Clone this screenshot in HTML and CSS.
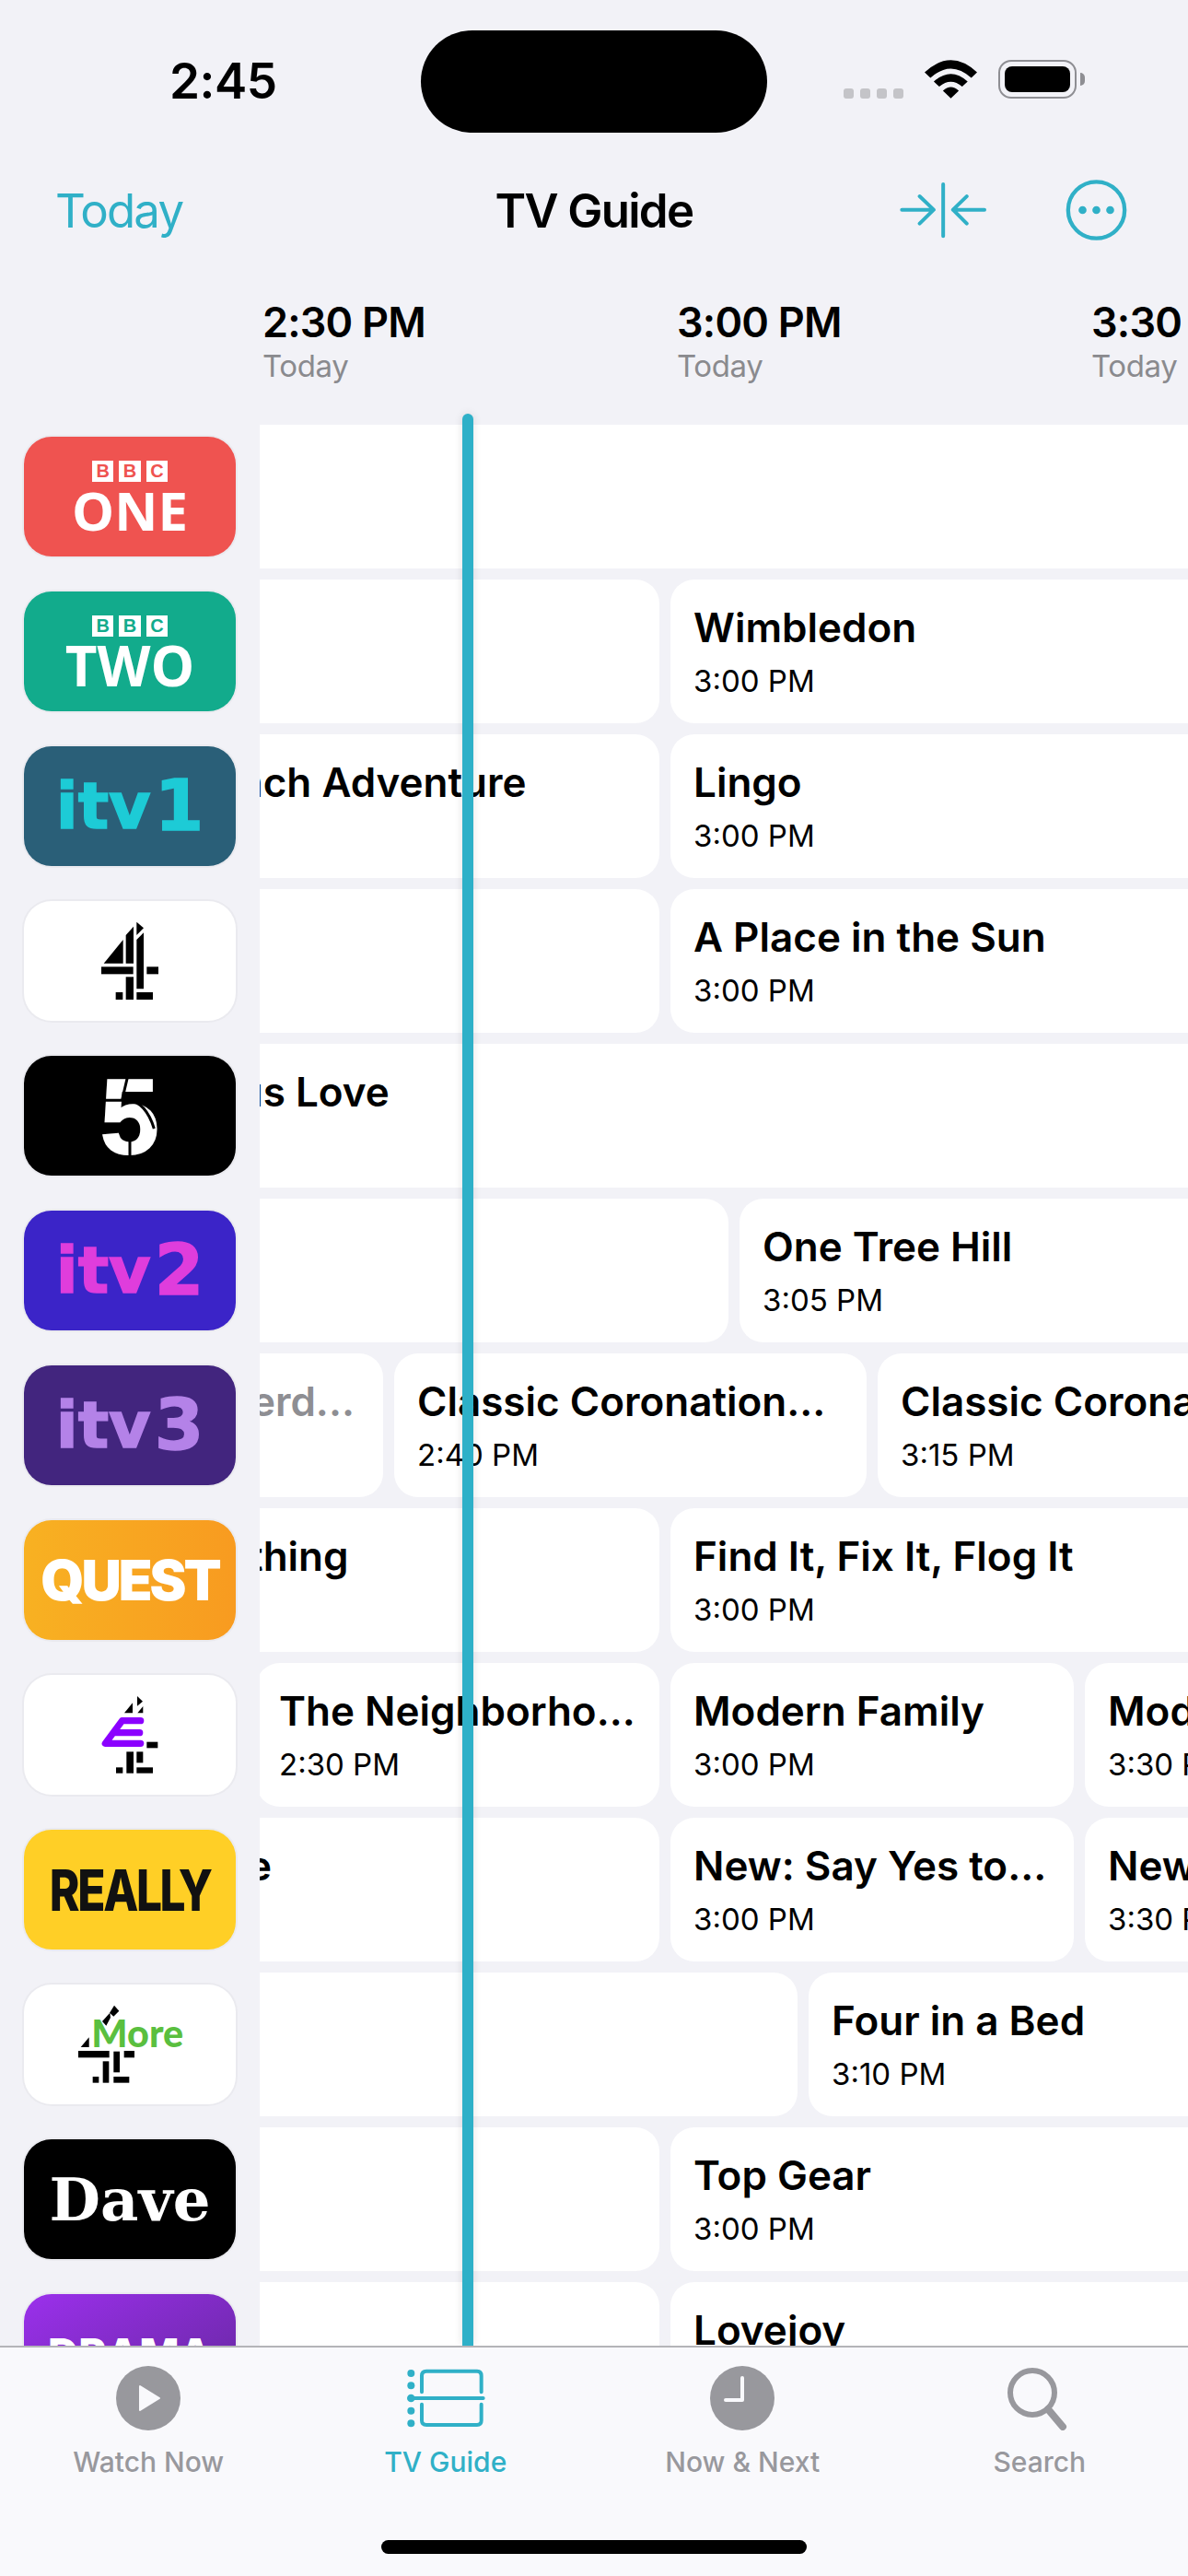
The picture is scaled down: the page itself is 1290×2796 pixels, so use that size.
FILE: index.html
```html
<!DOCTYPE html>
<html lang="en">
<head>
    <meta charset="UTF-8">
    <meta name="viewport" content="width=device-width, initial-scale=1.0">
    <title>TV Guide</title>
    <link rel="stylesheet" href="styles.css">
</head>
<body>
<div class="app">
    <!-- Status bar -->
    <div class="status-bar">
        <div class="status-time">2:45</div>
        <div class="island"></div>
        <div class="status-icons">
            <div class="signal"><span></span><span></span><span></span><span></span></div>
            <svg class="wifi" viewBox="312 45 172 125">
                <path d="M312 85Q398 5 484 85L465 103Q398 42 331 103Z"/>
                <path d="M342 115Q398 65 453 115L435 132Q398 100 360 132Z"/>
                <path d="M372 145Q398 122 424 145L398 170Z"/>
            </svg>
            <div class="battery"><div class="battery-fill"></div></div>
            <div class="battery-nub"></div>
        </div>
    </div>

    <!-- Nav bar -->
    <div class="nav-bar">
        <a class="nav-today">Today</a>
        <h1 class="nav-title">TV Guide</h1>
        <div class="nav-actions">
            <svg class="icon-collapse" viewBox="225 435 295 195">
                <path d="M373 447V616M238 530H340M296 486L342 530L296 575M508 530H405M450 486L405 530L450 575"/>
            </svg>
            <svg class="icon-more" viewBox="771 431 200 198">
                <circle class="ring" cx="871" cy="530" r="92"/>
                <circle cx="826" cy="530" r="13"/>
                <circle cx="871" cy="530" r="13"/>
                <circle cx="916" cy="530" r="13"/>
            </svg>
        </div>
    </div>

    <!-- Time header -->
    <div class="time-head">
        <div class="time-slot"><div class="slot-time">2:30 PM</div><div class="slot-day">Today</div></div>
        <div class="time-slot"><div class="slot-time">3:00 PM</div><div class="slot-day">Today</div></div>
        <div class="time-slot"><div class="slot-time">3:30 PM</div><div class="slot-day">Today</div></div>
    </div>

    <!-- Guide -->
    <div class="guide-wrap">
        <div class="guide">
            <div class="row">
                <div class="logo-cell"><div class="logo bbc bbc-one"><div class="bbc-blocks"><span>B</span><span>B</span><span>C</span></div><div class="bbc-name">ONE</div></div></div>
                <div class="track">
                    <div class="prog" style="margin-left:-100px;width:1400px"></div>
                </div>
            </div>
            <div class="row">
                <div class="logo-cell"><div class="logo bbc bbc-two"><div class="bbc-blocks"><span>B</span><span>B</span><span>C</span></div><div class="bbc-name">TWO</div></div></div>
                <div class="track">
                    <div class="prog" style="margin-left:-100px;width:534px"></div>
                    <div class="prog" style="width:900px"><div class="prog-title">Wimbledon</div><div class="prog-time">3:00 PM</div></div>
                </div>
            </div>
            <div class="row">
                <div class="logo-cell"><div class="logo itv itv-1">itv<b>1</b></div></div>
                <div class="track">
                    <div class="prog" style="margin-left:-100px;width:534px"><div class="prog-title">Lunch Adventure</div></div>
                    <div class="prog" style="width:900px"><div class="prog-title">Lingo</div><div class="prog-time">3:00 PM</div></div>
                </div>
            </div>
            <div class="row">
                <div class="logo-cell">
                    <div class="logo logo-white">
                        <svg class="mark" viewBox="3 24 300 330">
                            <polygon points="175,62 198,82 175,105"/>
                            <polygon points="140,105 165,77 165,197 140,197"/>
                            <polygon points="175,120 198,97 198,280 175,280"/>
                            <polygon points="68,197 131,120 131,197"/>
                            <rect x="60" y="208" width="104" height="24"/>
                            <rect x="208" y="208" width="38" height="24"/>
                            <rect x="140" y="241" width="25" height="74"/>
                            <rect x="107" y="291" width="23" height="24"/>
                            <rect x="175" y="291" width="53" height="24"/>
                        </svg>
                    </div>
                </div>
                <div class="track">
                    <div class="prog" style="margin-left:-100px;width:534px"></div>
                    <div class="prog" style="width:900px"><div class="prog-title">A Place in the Sun</div><div class="prog-time">3:00 PM</div></div>
                </div>
            </div>
            <div class="row">
                <div class="logo-cell">
                    <div class="logo logo-black">
                        <svg class="mark" viewBox="3 18 300 330">
                            <text class="five" x="56" y="305">5</text>
                            <path class="five-cut" d="M147 50L127 135M60 133H150Q205 140 232 225M153 250V320"/>
                        </svg>
                    </div>
                </div>
                <div class="track">
                    <div class="prog" style="margin-left:-165px;width:1500px"><div class="prog-title">Famous Love</div></div>
                </div>
            </div>
            <div class="row">
                <div class="logo-cell"><div class="logo itv itv-2">itv<b>2</b></div></div>
                <div class="track">
                    <div class="prog" style="margin-left:-100px;width:609px"></div>
                    <div class="prog" style="width:900px"><div class="prog-title">One Tree Hill</div><div class="prog-time">3:05 PM</div></div>
                </div>
            </div>
            <div class="row">
                <div class="logo-cell"><div class="logo itv itv-3">itv<b>3</b></div></div>
                <div class="track">
                    <div class="prog past" style="margin-left:-140px;width:274px"><div class="prog-title">Emmerd...</div></div>
                    <div class="prog" style="width:513px"><div class="prog-title">Classic Coronation...</div><div class="prog-time">2:40 PM</div></div>
                    <div class="prog" style="width:900px"><div class="prog-title">Classic Coronation...</div><div class="prog-time">3:15 PM</div></div>
                </div>
            </div>
            <div class="row">
                <div class="logo-cell"><div class="logo logo-quest">QUEST</div></div>
                <div class="track">
                    <div class="prog" style="margin-left:-158px;width:592px"><div class="prog-title">Something</div></div>
                    <div class="prog" style="width:900px"><div class="prog-title">Find It, Fix It, Flog It</div><div class="prog-time">3:00 PM</div></div>
                </div>
            </div>
            <div class="row">
                <div class="logo-cell">
                    <div class="logo logo-white">
                        <svg class="mark mark-wide" viewBox="-27 -6 360 330">
                            <polygon points="177,33 195,50 177,65"/>
                            <polygon points="135,88 162,55 162,88"/>
                            <polygon points="178,88 196,66 196,88"/>
                            <path class="e4-bars" d="M188 113H128L73 187H188M104 152H185"/>
                            <rect x="208" y="182" width="36" height="20"/>
                            <rect x="142" y="214" width="23" height="70"/>
                            <rect x="175" y="214" width="21" height="36"/>
                            <rect x="108" y="265" width="22" height="19"/>
                            <rect x="175" y="265" width="53" height="19"/>
                        </svg>
                    </div>
                </div>
                <div class="track">
                    <div class="prog" style="margin-left:-4px;width:438px"><div class="prog-title">The Neighborho...</div><div class="prog-time">2:30 PM</div></div>
                    <div class="prog" style="width:438px"><div class="prog-title">Modern Family</div><div class="prog-time">3:00 PM</div></div>
                    <div class="prog" style="width:500px"><div class="prog-title">Modern Family</div><div class="prog-time">3:30 PM</div></div>
                </div>
            </div>
            <div class="row">
                <div class="logo-cell"><div class="logo logo-really"><span>REALLY</span></div></div>
                <div class="track">
                    <div class="prog" style="margin-left:-415px;width:849px"><div class="prog-title">Don't Tell the Bride</div></div>
                    <div class="prog" style="width:438px"><div class="prog-title">New: Say Yes to...</div><div class="prog-time">3:00 PM</div></div>
                    <div class="prog" style="width:500px"><div class="prog-title">New: Say Yes to...</div><div class="prog-time">3:30 PM</div></div>
                </div>
            </div>
            <div class="row">
                <div class="logo-cell">
                    <div class="logo logo-white">
                        <svg class="mark mark-more" viewBox="-12 -18 450 330">
                            <polygon points="162,20 178,38 160,56 147,44"/>
                            <polygon points="123,72 148,44 150,60 136,86"/>
                            <polygon points="53,156 80,124 80,156"/>
                            <rect x="45" y="168" width="101" height="22"/>
                            <rect x="194" y="168" width="34" height="22"/>
                            <rect x="125" y="202" width="20" height="70"/>
                            <rect x="160" y="170" width="20" height="68"/>
                            <rect x="92" y="252" width="20" height="20"/>
                            <rect x="160" y="252" width="51" height="20"/>
                            <text class="more-text" x="88" y="155">More</text>
                        </svg>
                    </div>
                </div>
                <div class="track">
                    <div class="prog" style="margin-left:-100px;width:684px"></div>
                    <div class="prog" style="width:900px"><div class="prog-title">Four in a Bed</div><div class="prog-time">3:10 PM</div></div>
                </div>
            </div>
            <div class="row">
                <div class="logo-cell"><div class="logo logo-dave">Dave</div></div>
                <div class="track">
                    <div class="prog" style="margin-left:-100px;width:534px"></div>
                    <div class="prog" style="width:900px"><div class="prog-title">Top Gear</div><div class="prog-time">3:00 PM</div></div>
                </div>
            </div>
            <div class="row">
                <div class="logo-cell"><div class="logo logo-drama">DRAMA</div></div>
                <div class="track">
                    <div class="prog" style="margin-left:-100px;width:534px"></div>
                    <div class="prog" style="width:900px"><div class="prog-title">Lovejoy</div><div class="prog-time">3:00 PM</div></div>
                </div>
            </div>
        </div>
        <div class="now-line"></div>
    </div>

    <!-- Tab bar -->
    <div class="tab-bar">
        <div class="tabs">
            <div class="tab">
                <svg class="tab-icon" viewBox="0 0 70 70"><circle cx="35" cy="35" r="35"/><path class="tab-cut" d="M26 22V48L47 35Z"/></svg>
                <div class="tab-label">Watch Now</div>
            </div>
            <div class="tab active">
                <svg class="tab-icon guide-icon" viewBox="60 40 270 210">
                    <circle cx="82" cy="64" r="12"/><circle cx="82" cy="104" r="12"/><circle cx="82" cy="145" r="13"/><circle cx="82" cy="186" r="12"/><circle cx="82" cy="227" r="12"/>
                    <path d="M117 125V72Q117 57 132 57H297Q311 57 311 72V125M117 165V218Q117 232 132 232H297Q311 232 311 218V165M82 145H317"/>
                </svg>
                <div class="tab-label">TV Guide</div>
            </div>
            <div class="tab">
                <svg class="tab-icon" viewBox="0 0 70 70"><circle cx="35" cy="35" r="35"/><path class="clock-hands" d="M35 13V37H17"/></svg>
                <div class="tab-label">Now &amp; Next</div>
            </div>
            <div class="tab">
                <svg class="tab-icon search-icon" viewBox="0 0 70 70"><circle cx="27" cy="29" r="24"/><path d="M44 47L60 66"/></svg>
                <div class="tab-label">Search</div>
            </div>
        </div>
        <div class="home-indicator"></div>
    </div>
</div>
</body>
</html>
```

FILE: styles.css
```css
* {
    margin: 0;
    padding: 0;
    box-sizing: border-box;
}

body {
    font-family: Inter, "Liberation Sans", sans-serif;
    background-color: #f2f2f7;
    color: #000;
}

.app {
    width: 1290px;
    height: 2796px;
    display: flex;
    flex-direction: column;
    overflow: hidden;
}

/* Status bar */
.status-bar {
    display: flex;
    height: 144px;
    padding-top: 33px;
    flex: none;
}

.status-time {
    width: 457px;
    padding-left: 184px;
    padding-top: 23px;
    font-size: 53px;
    line-height: 64px;
    font-weight: 600;
    letter-spacing: -0.5px;
}

.island {
    width: 376px;
    height: 111px;
    background-color: #000;
    border-radius: 56px;
}

.status-icons {
    display: flex;
    align-items: flex-end;
    height: 74px;
    padding-left: 83px;
}

.signal {
    display: flex;
    gap: 7px;
    margin-right: 23px;
}

.signal span {
    width: 11px;
    height: 11px;
    border-radius: 3px;
    background-color: #c4c4c8;
}

.wifi {
    width: 57px;
    height: 42px;
    margin-right: 23px;
}

.battery {
    width: 85px;
    height: 42px;
    padding: 5px;
    border: 2.5px solid #8e8e93;
    border-radius: 14px;
}

.battery-fill {
    width: 100%;
    height: 100%;
    background-color: #000;
    border-radius: 8px;
}

.battery-nub {
    width: 5px;
    height: 14px;
    margin: 0 0 14px 4px;
    background-color: #8e8e93;
    border-radius: 0 7px 7px 0;
}

/* Nav bar */
.nav-bar {
    display: grid;
    grid-template-columns: 1fr auto 1fr;
    align-items: center;
    height: 108px;
    margin-top: 30px;
    flex: none;
}

.nav-today {
    padding-left: 60px;
    font-size: 51px;
    letter-spacing: -1.8px;
    color: #30b0c7;
}

.nav-title {
    font-size: 51px;
    font-weight: 600;
    letter-spacing: -1.7px;
}

.nav-actions {
    display: flex;
    justify-content: flex-end;
    align-items: center;
    gap: 84px;
    padding-right: 66px;
}

.icon-collapse {
    width: 98px;
    height: 65px;
    fill: none;
    stroke: #30b0c7;
    stroke-width: 12;
    stroke-linecap: round;
    stroke-linejoin: round;
}

.icon-more {
    width: 67px;
    height: 66px;
    fill: #30b0c7;
}

.icon-more .ring {
    fill: none;
    stroke: #30b0c7;
    stroke-width: 13;
}

/* Time header */
.time-head {
    display: flex;
    height: 179px;
    padding: 41px 0 0 285px;
    flex: none;
}

.time-slot {
    width: 450px;
    flex: none;
}

.slot-time {
    font-size: 45px;
    line-height: 54px;
    font-weight: 600;
    letter-spacing: -0.8px;
}

.slot-day {
    font-size: 33px;
    line-height: 40px;
    letter-spacing: -0.4px;
    color: #8a8a8e;
}

/* Guide */
.guide-wrap {
    position: relative;
    flex: 1;
    min-height: 0;
}

.guide {
    height: 100%;
    overflow: hidden;
    display: flex;
    flex-direction: column;
    gap: 12px;
}

.row {
    display: flex;
    height: 156px;
    flex: none;
}

.logo-cell {
    width: 282px;
    padding: 13px 0 0 26px;
    flex: none;
}

.track {
    display: flex;
    gap: 12px;
    width: 1008px;
    overflow: hidden;
}

.prog {
    flex: none;
    height: 156px;
    padding: 26px 0 0 25px;
    background-color: #fff;
    border-radius: 26px;
}

.prog-title {
    font-size: 44px;
    line-height: 52px;
    font-weight: 600;
    white-space: nowrap;
}

.past .prog-title {
    color: #8e8e93;
}

.prog-time {
    margin-top: 12px;
    font-size: 33px;
    line-height: 40px;
}

.now-line {
    position: absolute;
    top: -12px;
    bottom: 0;
    left: 502px;
    width: 12px;
    background-color: #2eb0c8;
    border-radius: 6px 6px 0 0;
    box-shadow: 0 0 10px rgba(0, 0, 0, 0.12);
}

/* Channel logos */
.logo {
    display: flex;
    align-items: center;
    justify-content: center;
    width: 230px;
    height: 130px;
    border-radius: 30px;
    box-shadow: 0 0 0 2px rgba(0, 0, 0, 0.03);
}

.bbc {
    flex-direction: column;
    justify-content: flex-start;
    padding-top: 26px;
    color: #fff;
}

.bbc-blocks {
    display: flex;
    gap: 5.7px;
}

.bbc-blocks span {
    width: 23.7px;
    height: 23px;
    background-color: #fff;
    font-family: "Liberation Sans", sans-serif;
    font-size: 20px;
    line-height: 23px;
    font-weight: 700;
    text-align: center;
}

.bbc-name {
    margin-top: 1px;
    font-family: "Open Sans", sans-serif;
    font-size: 58px;
    line-height: 60px;
    font-weight: 700;
}

.bbc-one {
    background-color: #ef5350;
}

.bbc-one .bbc-blocks span {
    color: #ef5350;
}

.bbc-two {
    background-color: #12ab8c;
}

.bbc-two .bbc-blocks span {
    color: #12ab8c;
}

.bbc-two .bbc-name {
    font-size: 60px;
}

.itv {
    font-family: "DejaVu Sans", sans-serif;
    font-size: 70px;
    line-height: 84px;
    font-weight: 700;
    letter-spacing: 0;
    -webkit-text-stroke: 1.5px currentColor;
}

.itv b {
    margin-left: 4px;
    font-size: 77px;
    font-weight: 700;
}

.itv-1 {
    background-color: #2a5f78;
    color: #1dcbd6;
}

.itv-2 {
    background-color: #3b24c8;
    color: #df3ddc;
}

.itv-3 {
    background-color: #42257e;
    color: #b482e8;
}

.logo-white {
    background-color: #fff;
}

.logo-black {
    background-color: #000;
}

.mark {
    width: 100px;
    height: 110px;
}

.mark-wide {
    width: 120px;
}

.mark-more {
    width: 150px;
}

.five {
    font-family: "Liberation Sans", sans-serif;
    font-size: 345px;
    font-weight: 700;
    fill: #fff;
    stroke: #fff;
    stroke-width: 6;
}

.five-cut {
    fill: none;
    stroke: #000;
    stroke-width: 9;
}

.e4-bars {
    fill: none;
    stroke: #8b00ff;
    stroke-width: 22;
    stroke-linecap: round;
    stroke-linejoin: round;
}

.more-text {
    font-family: Lato, sans-serif;
    font-size: 124px;
    font-weight: 900;
    fill: #5abf3f;
}

.logo-quest {
    background-image: linear-gradient(90deg, #f8b122, #f89b20);
    color: #fff;
    font-size: 60px;
    font-weight: 900;
    letter-spacing: -3px;
}

.logo-really {
    background-color: #ffcf26;
    color: #111;
    font-size: 62px;
    font-weight: 800;
    letter-spacing: -3px;
}

.logo-really span {
    transform: scaleX(0.8);
}

.logo-dave {
    background-color: #000;
    color: #fff;
    font-family: "DejaVu Serif", serif;
    font-size: 64px;
    font-weight: 700;
}

.logo-drama {
    background-image: linear-gradient(150deg, #9b30ec, #62279a);
    color: #fff;
    font-size: 46px;
    font-weight: 800;
}

/* Tab bar */
.tab-bar {
    position: relative;
    display: flex;
    flex-direction: column;
    height: 250px;
    flex: none;
    background-color: #f9f9fc;
    border-top: 2px solid #b4b4b8;
}

.tabs {
    display: grid;
    grid-template-columns: repeat(4, 1fr);
    padding-top: 20px;
}

.tab {
    display: flex;
    flex-direction: column;
    align-items: center;
    color: #98989d;
}

.tab.active {
    color: #30b0c7;
}

.tab-icon {
    width: 70px;
    height: 70px;
    fill: #98989d;
}

.tab-cut {
    fill: #f9f9fc;
    stroke: #f9f9fc;
    stroke-width: 2;
    stroke-linejoin: round;
}

.clock-hands {
    fill: none;
    stroke: #f9f9fc;
    stroke-width: 4;
    stroke-linecap: round;
    stroke-linejoin: round;
}

.guide-icon {
    width: 90px;
    fill: #30b0c7;
}

.guide-icon path {
    fill: none;
    stroke: #30b0c7;
    stroke-width: 12;
    stroke-linecap: round;
}

.search-icon {
    fill: none;
    stroke: #98989d;
    stroke-width: 6;
    stroke-linecap: round;
}

.search-icon path {
    stroke-width: 8;
}

.tab-label {
    margin-top: 16px;
    font-size: 30px;
    line-height: 36px;
    font-weight: 500;
}

.home-indicator {
    width: 462px;
    height: 15px;
    margin: auto auto 24px;
    background-color: #000;
    border-radius: 8px;
}
```
